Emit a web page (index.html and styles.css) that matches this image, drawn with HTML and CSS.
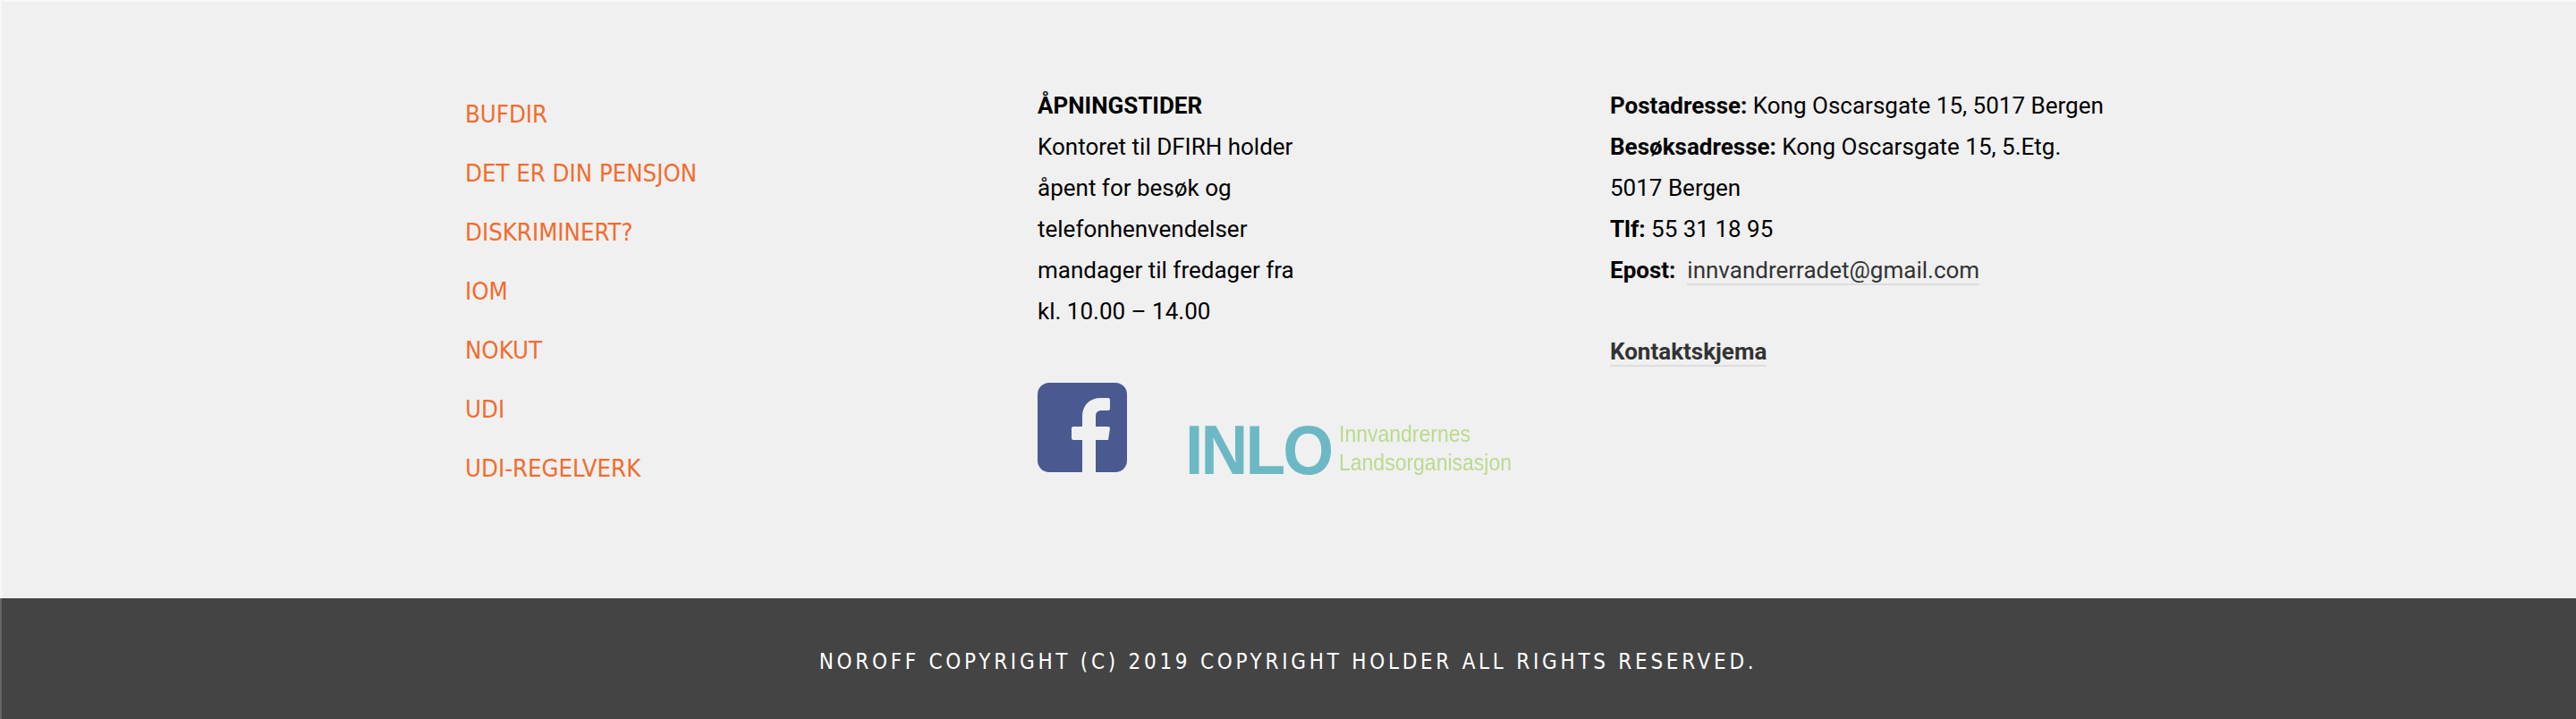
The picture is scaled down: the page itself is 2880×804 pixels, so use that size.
FILE: index.html
```html
<!doctype html>

<html lang="en">
    <head>
        <meta charset="utf-8">
        <title>Footer</title>
        <link rel="stylesheet" href="styles.css">
    </head>
    <body>
        <div class="widgets">
            <div class="container">
                <div class="col">
                    <ul class="links">
                        <li><a href="#">BUFDIR</a></li>
                        <li><a href="#">DET ER DIN PENSJON</a></li>
                        <li><a href="#">DISKRIMINERT?</a></li>
                        <li><a href="#">IOM</a></li>
                        <li><a href="#">NOKUT</a></li>
                        <li><a href="#">UDI</a></li>
                        <li><a href="#">UDI-REGELVERK</a></li>
                    </ul>
                </div>
                <div class="col">
                    <p>
                        <strong>ÅPNINGSTIDER</strong><br>
                        Kontoret til DFIRH holder<br>
                        åpent for besøk og<br>
                        telefonhenvendelser<br>
                        mandager til fredager fra<br>
                        kl. 10.00 – 14.00
                    </p>
                    <div class="logos">
                        <svg class="fb" viewBox="0 0 100 100" width="100" height="100">
                            <rect width="100" height="100" rx="13" fill="#4a5a91"/>
                            <path fill="#f0f0f0" d="M50 100V64H40a2 2 0 0 1-2-2V51a2 2 0 0 1 2-2H50V38C50 25 58 17 71 17H79a2 2 0 0 1 2 2V29a2 2 0 0 1-2 2H72C67 31 65 33 65 38V49H79a2 2 0 0 1 2 2L79 64H65V100Z"/>
                        </svg>
                        <svg class="inlo" viewBox="0 0 361 58" width="361" height="58">
                            <text class="inlo-mark" transform="translate(-4 56) scale(.95 1)">INLO</text>
                            <text class="inlo-name" x="168" y="20" textLength="147" lengthAdjust="spacingAndGlyphs">Innvandrernes</text>
                            <text class="inlo-name" x="168" y="52" textLength="193" lengthAdjust="spacingAndGlyphs">Landsorganisasjon</text>
                        </svg>
                    </div>
                </div>
                <div class="col">
                    <p>
                        <strong>Postadresse:</strong> Kong Oscarsgate 15, 5017 Bergen<br>
                        <strong>Besøksadresse:</strong> Kong Oscarsgate 15, 5.Etg.<br>
                        5017 Bergen<br>
                        <strong>Tlf:</strong> 55 31 18 95<br>
                        <strong>Epost:</strong>&nbsp; <a class="line-link" href="#">innvandrerradet@gmail.com</a>
                    </p>
                    <p class="contact"><a class="line-link" href="#"><strong>Kontaktskjema</strong></a></p>
                </div>
            </div>
        </div>
        <div class="copyright">Noroff Copyright (c) 2019 Copyright Holder All rights reserved.</div>
    </body>
</html>
```

FILE: styles.css
```css
html, body {
    margin: 0;
    padding: 0;
}
body {
    background: #f0f0f0;
    color: #000;
    font-family: Roboto, "Liberation Sans", sans-serif;
    font-size: 26px;
    line-height: 46px;
}
p {
    margin: 0;
}
a {
    color: inherit;
    text-decoration: none;
}
.widgets {
    border-top: 2px solid #f8f8f8;
    box-shadow: inset 2px 0 0 #f8f8f8;
    box-sizing: border-box;
    height: 669px;
    padding-top: 93px;
}
.container {
    display: grid;
    grid-template-columns: repeat(3, 640px);
    margin: 0 auto;
    width: 1920px;
}
.col {
    padding: 0 40px;
}
.links {
    font-family: "DejaVu Sans Condensed", "DejaVu Sans", sans-serif;
    list-style: none;
    margin: 0;
    padding: 0;
}
.links li {
    color: #f26c2d;
    font-size: 27.3px;
    line-height: 66px;
}
.logos {
    align-items: flex-end;
    display: flex;
    gap: 69px;
    margin-top: 57px;
}
.fb, .inlo {
    display: block;
}
.inlo {
    filter: blur(0.6px);
    line-height: normal;
    margin-bottom: -4px;
    overflow: visible;
}
.inlo-mark {
    fill: #6cb8c5;
    font-family: "Liberation Sans", sans-serif;
    font-size: 77px;
    font-weight: 700;
    letter-spacing: -3px;
}
.inlo-name {
    fill: #bbda8e;
    font-family: "Liberation Sans", sans-serif;
    font-size: 25px;
}
.line-link {
    border-bottom: 2px solid #ddd;
    color: #333;
}
.contact {
    margin-top: 45px;
}
.copyright {
    align-items: center;
    background: #444;
    box-shadow: inset 2px 0 0 #666;
    box-sizing: border-box;
    color: #fff;
    display: flex;
    font-family: "DejaVu Sans Condensed", "DejaVu Sans", sans-serif;
    font-size: 24px;
    height: 135px;
    justify-content: center;
    letter-spacing: 3.72px;
    padding-top: 6px;
    text-transform: uppercase;
}
```
